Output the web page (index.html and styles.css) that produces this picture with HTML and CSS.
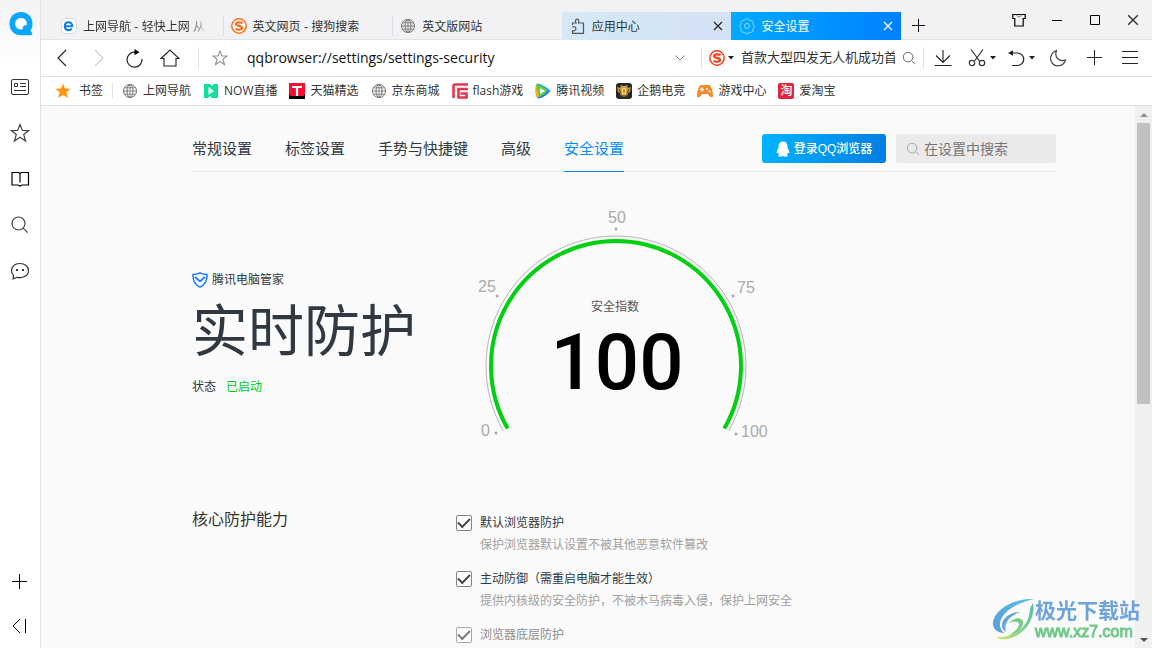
FILE: index.html
```html
<!DOCTYPE html>
<html lang="zh-CN">
<head>
<meta charset="utf-8">
<title>安全设置</title>
<link rel="stylesheet" href="styles.css">
</head>
<body>
<svg class="sprite" aria-hidden="true">
  <symbol id="globe" viewBox="0 0 16 16"><g fill="none" stroke="#707070"><circle cx="8" cy="8" r="6.5"/><ellipse cx="8" cy="8" rx="3" ry="6.5"/><path d="M8 1.5v13M2.5 4.8h11M1.5 8h13M2.5 11.2h11" stroke-width=".8"/></g></symbol>
  <symbol id="sogou" viewBox="0 0 16 16"><circle cx="8" cy="8" r="7.2" fill="#fff" stroke="currentColor" stroke-width="1.500"/><path d="M11.500 5.200C10 3.900 5.200 3.900 5 6.100c-.1 2.200 6.100 1.400 6 3.800-.1 2.300-4.800 2.300-6.400.8" fill="none" stroke="currentColor" stroke-width="2.200"/></symbol>
  <symbol id="lens" viewBox="0 0 16 16"><circle cx="7" cy="7" r="5.500" fill="none" stroke="currentColor"/><path d="M11 11l4 4" stroke="currentColor"/></symbol>
  <symbol id="cross" viewBox="0 0 10 10"><path d="M1 1l8 8M9 1l-8 8" stroke="currentColor" stroke-width="1.2"/></symbol>
  <symbol id="caret" viewBox="0 0 6 4"><path d="M0 0h6L3 3.5z" fill="#222"/></symbol>
</svg>

<aside class="sidebar">
  <a class="logo" href="#" aria-label="QQ浏览器"><svg width="24" height="24" viewBox="0 0 24 24"><path d="M12 0C5 0 .5 5 .5 11.700c0 6.800 5 11.500 11.500 11.500h10.200c1.300 0 1.500-1.200.8-2.100l-1.500-2.300c1.400-2 2-4.400 2-7C23.500 5 18.800 0 12 0z" fill="#0aa5ff"/><path d="M12 6c-3.500 0-5.800 2.500-5.800 5.800S8.500 17.500 12 17.500c.8 0 1.500-.1 2-.4-1-2.200.7-4.200 3.500-3.700C18.600 9.500 16.200 6 12 6z" fill="#fff"/></svg></a>
  <button class="side-btn" aria-label="资讯"><svg width="20" height="20" viewBox="0 0 20 20" fill="none" stroke="#333"><rect x="1.500" y="2.500" width="17" height="15" rx="1.500"/><path d="M4.500 6.500h3v3h-3zM10 6.500h6M10 9.500h6M4 13.500h12"/></svg></button>
  <button class="side-btn" aria-label="收藏"><svg width="20" height="20" viewBox="0 0 20 20"><path d="M10 1.500l2.400 6h6.200l-4.900 4 1.900 6.500L10 14.200 4.400 18l1.900-6.500-4.900-4h6.200z" fill="none" stroke="#444" stroke-width="1.200"/></svg></button>
  <button class="side-btn" aria-label="阅读"><svg width="20" height="20" viewBox="0 0 20 20"><path d="M2 3.500h6.500l1.500 1 1.500-1H18.500v12.500H12l-2 1-2-1H2zM10 4.500v9" fill="none" stroke="#000" stroke-width="1.200"/></svg></button>
  <button class="side-btn" aria-label="搜索"><svg width="20" height="20" viewBox="0 0 20 20" fill="none" stroke="#444" stroke-width="1.200"><circle cx="8.500" cy="8.500" r="6.500"/><path d="M13.200 13.200l4.500 4.500"/></svg></button>
  <button class="side-btn" aria-label="消息"><svg width="20" height="20" viewBox="0 0 20 20"><path d="M3 17.800l.6-3.500C-1 9.500 2.500 2.500 10 2.500c5 0 8.500 3 8.500 7.200 0 4.800-5.500 8-11 6.600z" fill="none" stroke="#333" stroke-width="1.200"/><path d="M6 8h2v2H6zM12 8h2v2h-2z" fill="#333"/></svg></button>
  <div class="spacer"></div>
  <button class="side-btn side-low" aria-label="添加"><svg width="16" height="16" viewBox="0 0 16 16"><path d="M7.500 0v15M0 7.500h15" stroke="#000"/></svg></button>
  <button class="side-btn side-low" aria-label="收起"><svg width="16" height="16" viewBox="0 0 16 16"><path d="M8 1L1 8l7 7M13.500 1v14" fill="none" stroke="#000"/></svg></button>
</aside>

<div class="window">
  <header class="tabbar">
    <nav class="tabs" aria-label="标签页">
      <a class="tab" href="#"><svg width="16" height="16" viewBox="0 0 16 16"><rect x=".5" y=".5" width="15" height="15" rx="5" fill="#fff" stroke="#d4d8dd"/><path d="M4 8.200h7.300C11.300 2.800 3.800 2.900 3.800 8.200c0 4.500 5 5 7 2.500" fill="none" stroke="#0b7cea" stroke-width="2"/></svg><span class="tab-title fade">上网导航 - 轻快上网 从</span></a>
      <a class="tab divided" href="#"><svg class="orange" width="16" height="16"><use href="#sogou"/></svg><span class="tab-title">英文网页 - 搜狗搜索</span></a>
      <a class="tab divided" href="#"><svg width="16" height="16"><use href="#globe"/></svg><span class="tab-title">英文版网站</span></a>
      <div class="tab pale"><svg width="16" height="16" viewBox="0 0 16 16"><path d="M2.500 7V5H6C3.800-.3 10.200-.3 8.500 5H13.500v10.400H2.500V12.800c4.500.8 4.500-5 0-4" fill="none" stroke="#555" stroke-width="1.200"/></svg><a class="tab-title" href="#">应用中心</a><button class="tab-close" aria-label="关闭"><svg width="10" height="10"><use href="#cross"/></svg></button></div>
      <div class="tab current"><svg width="16" height="16" viewBox="0 0 16 16" fill="none" stroke="#9ad6ff"><path d="M8 .6c1.200 0 1.800 1.500 3 1.800s2.300.1 2.900 1-.2 2.200.2 3.100 1.300 1 1.300 1.800-.9 1.200-1.300 2.200.4 2.300-.3 3-2 .6-2.900 1S9.200 15.500 8 15.500s-1.800-.7-2.900-1.100-2.200-.2-2.900-1 .2-2-.2-3S.6 9.200.6 8.300s1-1.100 1.400-2-.4-2.200.3-3 1.700-.6 2.800-1S6.900.6 8 .6z"/><circle cx="8" cy="8" r="2.500"/></svg><a class="tab-title" href="#">安全设置</a><button class="tab-close" aria-label="关闭"><svg width="10" height="10"><use href="#cross"/></svg></button></div>
    </nav>
    <button class="new-tab" aria-label="新建标签页"><svg width="14" height="14" viewBox="0 0 14 14"><path d="M6.500 0v13M0 6.500h13" stroke="#111"/></svg></button>
    <div class="spacer"></div>
    <div class="controls">
      <button aria-label="皮肤"><svg width="14" height="14" viewBox="0 0 14 14" fill="none" stroke="#000"><path d="M.8 1.500h12.400v4h-2v7.500H2.800V5.500h-2z" stroke-width="1.200"/><path d="M4.500 1.500c.5 3 4.500 3 5 0" stroke="#777"/></svg></button>
      <button aria-label="最小化"><svg width="10" height="10" viewBox="0 0 10 10"><path d="M0 5.500h10" stroke="#000"/></svg></button>
      <button aria-label="最大化"><svg width="10" height="10" viewBox="0 0 10 10"><path d="M.5.5h9v9h-9z" fill="none" stroke="#000"/></svg></button>
      <button aria-label="关闭窗口"><svg width="12" height="12"><use href="#cross"/></svg></button>
    </div>
  </header>

  <div class="toolbar">
    <button class="tool" aria-label="后退"><svg width="18" height="18" viewBox="0 0 18 18"><path d="M13 1L5 9l8 8" fill="none" stroke="#222" stroke-width="1.100"/></svg></button>
    <button class="tool" aria-label="前进"><svg width="18" height="18" viewBox="0 0 18 18"><path d="M6 1l8 8-8 8" fill="none" stroke="#ccc" stroke-width="1.100"/></svg></button>
    <button class="tool" aria-label="刷新"><svg width="18" height="20" viewBox="0 0 18 20"><path d="M11 4.200H9A7.500 7.500 0 1 0 17 11" fill="none" stroke="#222" stroke-width="1.200"/><path d="M9.500 1l5 3.200-5 3z" fill="#000"/></svg></button>
    <button class="tool" aria-label="主页"><svg width="20" height="18" viewBox="0 0 20 18"><path d="M1 9.500L10 1l9 8.500h-3V17H4V9.500z" fill="none" stroke="#222" stroke-width="1.100"/></svg></button>
    <i class="rule nav-rule"></i>
    <button class="tool" aria-label="添加书签"><svg width="16" height="16" viewBox="0 0 16 16"><path d="M8 1l1.900 5H15l-4.100 3.200 1.500 5.300L8 11.400l-4.400 3.100 1.500-5.300L1 6h5.100z" fill="none" stroke="#999" stroke-width="1.200"/></svg></button>
    <input class="address" type="text" aria-label="地址" value="qqbrowser://settings/settings-security">
    <button class="drop" aria-label="历史地址"><svg width="10" height="6" viewBox="0 0 10 6"><path d="M.5.500L5 5 9.500.5" fill="none" stroke="#888"/></svg></button>
    <i class="rule"></i>
    <div class="websearch">
      <button class="engine" aria-label="搜索引擎"><svg class="red" width="16" height="16"><use href="#sogou"/></svg><svg width="6" height="4"><use href="#caret"/></svg></button>
      <input class="query" type="text" aria-label="搜索" value="首款大型四发无人机成功首飞">
      <button class="go" aria-label="搜索"><svg width="14" height="14"><use href="#lens"/></svg></button>
    </div>
    <i class="rule"></i>
    <button class="tool wide" aria-label="下载"><svg width="18" height="18" viewBox="0 0 18 18"><path d="M9 1v12M2 6.500L9 13.500l7-7M.5 16.500h17" fill="none" stroke="#222" stroke-width="1.100"/></svg></button>
    <button class="tool split" aria-label="截图"><svg width="18" height="18" viewBox="0 0 18 18" fill="none" stroke="#333" stroke-width="1.200"><path d="M3 .5L11.500 12M15 .5L6.500 12"/><circle cx="4" cy="14" r="2.700"/><circle cx="14" cy="14" r="2.700"/></svg><svg width="6" height="4"><use href="#caret"/></svg></button>
    <button class="tool split" aria-label="撤销"><svg width="18" height="18" viewBox="0 0 18 18"><path d="M3 4h7.500a6.200 6.200 0 0 1 0 12.500H5" fill="none" stroke="#222" stroke-width="1.200"/><path d="M1 4l5-2.800v5.600z" fill="#222"/></svg><svg width="6" height="4"><use href="#caret"/></svg></button>
    <button class="tool" aria-label="夜间模式"><svg width="18" height="18" viewBox="0 0 18 18"><path d="M7.500 1.500C5 8 10 13 16.500 11.200 14 17.500 7 18.500 3.500 14.500S1.500 3.800 7.500 1.500z" fill="none" stroke="#444" stroke-width="1.200"/></svg></button>
    <button class="tool" aria-label="添加工具"><svg width="16" height="16" viewBox="0 0 16 16"><path d="M8.500 0v15M1 7.500h15" stroke="#222"/></svg></button>
    <button class="tool" aria-label="菜单"><svg width="16" height="14" viewBox="0 0 16 14"><path d="M0 .5h16M0 6.500h16M0 12.500h16" stroke="#222"/></svg></button>
  </div>

  <nav class="bookmarks" aria-label="书签栏">
    <a class="all" href="#"><svg width="16" height="16" viewBox="0 0 16 16"><path d="M8 .5l2 5.100 5.700.2-4.400 3.500 1.600 5.700L8 11.900 3.100 15l1.600-5.700L.3 5.800 6 5.600z" fill="#ff960d"/></svg>书签</a>
    <i class="rule"></i>
    <a href="#"><svg width="16" height="16"><use href="#globe"/></svg>上网导航</a>
    <a href="#"><svg width="16" height="16" viewBox="0 0 16 16"><path d="M1 1h6l2 2 2-2h4v14H9l-2-2-2 2H1z" fill="#10e09c"/><path d="M5.500 4v8l5.500-4z" fill="#fff"/></svg>NOW直播</a>
    <a href="#"><svg width="16" height="16" viewBox="0 0 16 16"><path d="M0 0h16v16H0z" fill="#ff0b32"/><path d="M0 11q1.500 3 4 2h8q2.500 1 4-2v5H0z" fill="#000"/><path d="M3 4h10M8 4v9" stroke="#fff" stroke-width="2.200"/></svg>天猫精选</a>
    <a href="#"><svg width="16" height="16"><use href="#globe"/></svg>京东商城</a>
    <a href="#"><svg width="16" height="16" viewBox="0 0 16 16"><path d="M1.500 15V3q0-1.500 1.500-1.500H16M6.500 15.500V6H16M8.500 10.500h6v4H6" fill="none" stroke="#e8344e" stroke-width="2.600"/></svg>flash游戏</a>
    <a href="#"><svg width="16" height="16" viewBox="0 0 16 16"><path d="M2 .5C6 .5 13 5 15.500 8L8 8 1 4z" fill="#18a5f5"/><path d="M15.500 8C12 12 7 15.500 2.500 15.500L2 8z" fill="#2878e8"/><path d="M1 1.500Q-1 8 1.500 14.500 7 13 12 8 7 2 1 1.500z" fill="#ffae13"/><path d="M1 1.500C5 1.500 10 5 12 8c-2 3-5 5-8 6z" fill="#59d33b"/><path d="M5 5v6l5-3z" fill="#fff"/></svg>腾讯视频</a>
    <a href="#"><svg width="16" height="16" viewBox="0 0 16 16"><rect width="16" height="16" rx="3" fill="#282828"/><path d="M1 4l3 1 1-3 2 1h2l2-1 1 3 3-1-1 5-2 1-1 3-3 1-3-1-1-3-2-1z" fill="#c9963b"/><ellipse cx="8" cy="8" rx="2.500" ry="3.500" fill="#f2d27b"/><path d="M8 6.500v3M3 6l2 4M13 6l-2 4M5 13h6" stroke="#59410f"/></svg>企鹅电竞</a>
    <a href="#"><svg width="16" height="16" viewBox="0 0 16 16"><path d="M4 2h8c2 0 4 6 4 11 0 2-3 1.500-4-.5l-1-1.500H5l-1 1.500c-1 2-4 2.500-4 .5C0 8 2 2 4 2z" fill="#f5892b"/><path d="M3 6.500h4M5 4.500v4M9 6h2M11.500 8.500h2" stroke="#fff" stroke-width="1.500"/></svg>游戏中心</a>
    <a href="#"><span class="tao">淘</span>爱淘宝</a>
  </nav>

  <div class="viewport">
    <main class="page">
      <div class="page-head">
        <nav class="sections" aria-label="设置">
          <a href="#">常规设置</a><a href="#">标签设置</a><a href="#">手势与快捷键</a><a href="#">高级</a><a class="on" href="#">安全设置</a>
        </nav>
        <button class="login"><svg width="14" height="16" viewBox="0 0 14 16"><path d="M7 .5c3 0 4.500 2 4.500 5v1.500c1.500 2 2.300 4 1.700 5.300-.4.500-1-.3-1.400-.8-.2.900-.6 1.500-1 2 1.500.5 1.500 2 .2 2H8L7 15l-1 .5H3c-1.300 0-1.300-1.500.2-2-.4-.5-.8-1.100-1-2-.4.500-1 1.300-1.400.8C.2 11 1 9 2.500 7V5.500c0-3 1.500-5 4.500-5z" fill="#fff"/></svg>登录QQ浏览器</button>
        <label class="find"><svg width="14" height="14"><use href="#lens"/></svg><input type="text" placeholder="在设置中搜索" aria-label="在设置中搜索"></label>
      </div>

      <section class="hero">
        <div class="guard">
          <p class="brand"><svg width="16" height="16" viewBox="0 0 16 16" fill="none" stroke="#1b78ff"><path d="M8 .8C10 2 13 2.500 15 2.500 15.200 8.500 12.500 13 8 15.200 3.500 13 .8 8.500 1 2.500 3 2.500 6 2 8 .8z" stroke-width="1.500"/><path d="M3 5l5 4.300L13 5" stroke-width="1.700"/></svg>腾讯电脑管家</p>
          <h1>实时防护</h1>
          <p class="status">状态<span>已启动</span></p>
        </div>
        <svg class="gauge" width="300" height="236" viewBox="0 0 300 236" role="img" aria-label="安全指数 100">
          <path d="M27.400 223A130 130 0 1 1 252.600 223" fill="none" stroke="#b5b5b5"/>
          <path d="M31.700 220.500A125 125 0 1 1 248.300 220.500" fill="none" stroke="#00cf12" stroke-width="4"/>
          <g fill="#aaa"><circle cx="140" cy="21" r="1.500"/><circle cx="21" cy="88" r="1.500"/><circle cx="257" cy="88" r="1.500"/><circle cx="20" cy="225" r="1.500"/><circle cx="260" cy="226" r="1.500"/></g>
          <g class="ticks"><text x="132" y="15">50</text><text x="2" y="84">25</text><text x="261" y="85">75</text><text x="5" y="228">0</text><text x="265" y="229">100</text></g>
          <text class="caption" x="139" y="103">安全指数</text>
          <text class="score" x="141" y="181">100</text>
        </svg>
      </section>

      <section class="core">
        <h2>核心防护能力</h2>
        <div class="options">
          <div class="option"><input id="o1" type="checkbox" checked><label for="o1">默认浏览器防护</label><p>保护浏览器默认设置不被其他恶意软件篡改</p></div>
          <div class="option"><input id="o2" type="checkbox" checked><label for="o2">主动防御（需重启电脑才能生效）</label><p>提供内核级的安全防护，不被木马病毒入侵，保护上网安全</p></div>
          <div class="option muted"><input id="o3" type="checkbox" checked disabled><label for="o3">浏览器底层防护</label></div>
        </div>
      </section>
    </main>
    <div class="scrollbar" aria-hidden="true"><span class="up"></span><span class="thumb"></span><span class="down"></span></div>
  </div>
</div>

<div class="watermark">
  <svg width="42" height="42" viewBox="0 0 42 42"><defs><linearGradient id="sky" x1="0" y1="1" x2="1" y2="0"><stop offset="0" stop-color="#5b9bd8"/><stop offset="1" stop-color="#58c0ee"/></linearGradient><linearGradient id="leaf" x1="0" y1="1" x2="1" y2="0"><stop offset="0" stop-color="#dbe66a"/><stop offset=".5" stop-color="#7fd08a"/><stop offset="1" stop-color="#55b8b0"/></linearGradient></defs><path d="M42 0C23-1 3 10 1 23c-1 7 5 11 11 11C5 28 7 18 18 10 25 5 33 2 42 0z" fill="url(#sky)"/><path d="M14 33C5 27 12 13 29 13c-11 3-18 11-15 20z" fill="#67a4dc"/><path d="M17 24c6-7 15-6 14 1-1 6-9 12-16 13 6-4 11-8 12-12 1-4-5-4-10-2z" fill="#78cc8c"/><path d="M41 4c3 16-9 33-26 36-4 1-8 0-11-2 17 1 28-8 32-18 2-5 1-11 5-16z" fill="url(#leaf)"/></svg>
  <div><b>极光下载站</b><span>www.xz7.com</span></div>
</div>
</body>
</html>
```
FILE: styles.css
```css
* { box-sizing: border-box; }

body {
  margin: 0;
  display: flex;
  height: 100vh;
  overflow: hidden;
  background: #fafafa;
  color: #333;
  font: 12px/16px "Liberation Sans", "Noto Sans CJK SC", sans-serif;
}

button {
  display: flex;
  align-items: center;
  justify-content: center;
  padding: 0;
  border: 0;
  background: none;
  color: inherit;
  font: inherit;
}

input { border: 0; outline: 0; padding: 0; min-width: 0; background: none; color: inherit; font: inherit; }
a { color: inherit; text-decoration: none; }
h1, h2, p { margin: 0; font-weight: 400; }
svg { flex: none; }
.sprite { position: absolute; width: 0; height: 0; }
.spacer { flex: 1; }
.orange { color: #ff6f1d; }
.red { color: #f5411e; }
.rule { flex: none; width: 1px; height: 22px; background: #e2e2e2; }

/* Sidebar */
.sidebar {
  flex: none;
  display: flex;
  flex-direction: column;
  width: 41px;
  border-right: 1px solid #e2e2e4;
  background: linear-gradient(#f3f3f5, #fff 64px);
}
.logo { height: 64px; padding: 12px 0 0 9px; }
.side-btn { height: 46px; }
.side-low { height: 44px; }

.window { flex: 1; min-width: 0; display: flex; flex-direction: column; }

/* Tabs */
.tabbar {
  flex: none;
  display: flex;
  height: 40px;
  padding-left: 12px;
  background: #f2f2f4;
  box-shadow: inset 0 -1px #e2e2e4;
}
.tabs { display: flex; flex: 0 1 848px; min-width: 0; padding-top: 12px; }
.tab { position: relative; flex: 1; min-width: 0; display: flex; align-items: center; gap: 6px; padding: 0 8px; }
.divided::before { content: ""; position: absolute; left: 0; top: 4px; width: 1px; height: 20px; background: #dedee2; }
.tab-title { flex: 1; min-width: 0; padding-top: 2px; overflow: hidden; white-space: nowrap; }
.fade { mask-image: linear-gradient(90deg, #000 104px, transparent 126px); }
.pale { background: linear-gradient(90deg, #d5e9f5, #d3e2f5); }
.current { background: linear-gradient(90deg, #00aaff, #0080ff); color: #fff; }
.tab-close { width: 10px; height: 16px; color: #222; }
.current .tab-close { color: #fff; }
.new-tab { width: 36px; padding-top: 12px; }
.controls { display: flex; }
.controls button { width: 38px; height: 40px; }

/* Toolbar */
.toolbar {
  flex: none;
  display: flex;
  align-items: center;
  height: 37px;
  padding: 0 4px 0 3px;
  border-bottom: 1px solid #e2e2e4;
  background: #fff;
}
.tool { flex: none; gap: 4px; width: 36px; height: 36px; }
.wide { width: 38px; }
.split { width: 39px; }
.nav-rule { margin: 0 3px 0 10px; }
.address { flex: 1; margin-left: 9px; color: #111; font: 14px/20px "Open Sans", sans-serif; }
.drop { width: 24px; height: 24px; margin-right: 9px; }
.websearch { flex: 0 1 221px; min-width: 0; display: flex; align-items: center; padding: 0 7px; }
.engine { flex: none; gap: 3px; margin-right: 7px; }
.query { flex: 1; width: 0; font-size: 13px; }
.go { flex: none; margin-left: 7px; color: #555; }

/* Bookmarks */
.bookmarks {
  flex: none;
  display: flex;
  align-items: center;
  gap: 12px;
  height: 29px;
  padding-left: 14px;
  border-bottom: 1px solid #e2e2e4;
  background: #fff;
  font-family: "Open Sans", "Noto Sans CJK SC", sans-serif;
  white-space: nowrap;
}
.bookmarks a { display: flex; align-items: center; gap: 5px; }
.bookmarks .all { gap: 8px; }
.bookmarks .rule { height: 16px; margin: 0 -3px; }
.tao { width: 16px; border-radius: 2px; background: #e0243a; color: #fff; font-weight: 500; text-align: center; }

/* Settings page */
.viewport { flex: 1; min-height: 0; display: flex; }
.page { flex: 1; min-width: 0; padding: 28px 80px 0 151px; overflow: hidden; }
.page-head { display: flex; align-items: flex-start; gap: 10px; height: 38px; border-bottom: 1px solid #e9e9e9; }
.sections { flex: 1; display: flex; gap: 33px; color: #303942; font-size: 15px; line-height: 29px; white-space: nowrap; }
.sections a { height: 38px; }
.sections .on { border-bottom: 1px solid #0a84f0; color: #0a8cff; }
.login {
  gap: 4px;
  width: 124px;
  height: 29px;
  border-radius: 3px;
  background: linear-gradient(100deg, #00b4ff, #007de3);
  color: #fff;
  font-weight: 500;
}
.find {
  display: flex;
  align-items: center;
  gap: 4px;
  width: 160px;
  height: 29px;
  padding: 0 10px;
  border-radius: 3px;
  background: #eaeaea;
  color: #999;
}
.find input { flex: 1; font-size: 14px; line-height: 20px; }
.find input::placeholder { color: #757575; }

.hero { display: grid; grid-template-columns: 284px 1fr; padding-top: 36px; }
.guard { padding-top: 64px; color: #303942; }
.brand { display: flex; align-items: center; gap: 4px; }
h1 { margin-top: 4px; font-size: 56px; line-height: 80px; }
.status { margin-top: 7px; }
.status span { margin-left: 10px; color: #00c814; }
.ticks { fill: #aaa; font-size: 16px; }
.caption { fill: #555; font-size: 12px; text-anchor: middle; }
.score { fill: #000; font: 500 78px Roboto, sans-serif; text-anchor: middle; }

.core { display: grid; grid-template-columns: 264px 1fr; padding-top: 71px; }
h2 { margin-top: -5px; font-size: 16px; line-height: 20px; }
.options { display: grid; gap: 18px; }
.option { display: grid; grid-template-columns: 16px 1fr; column-gap: 8px; row-gap: 6px; }
.option label { color: #303942; }
.option p { grid-column: 2; color: #a0a0a0; }
.option input {
  appearance: none;
  display: grid;
  place-items: center;
  width: 16px;
  height: 16px;
  margin: 0;
  border: 1px solid #858585;
  border-radius: 2px;
  background: #fff;
}
.option input:checked::after {
  content: "";
  width: 10px;
  height: 5px;
  margin-top: -3px;
  border: solid #4a4a4a;
  border-width: 0 0 2px 2px;
  transform: rotate(-45deg);
}
.muted input { opacity: .7; }
.option.muted label { color: #8c8c8c; }

.scrollbar { flex: none; display: flex; flex-direction: column; align-items: center; width: 17px; padding: 7px 0 6px; background: #f0f0f0; }
.up { border: 4px solid transparent; border-top: 0; border-bottom-color: #909090; }
.thumb { width: 13px; height: 281px; margin: 6px 0 auto; background: #c1c1c1; }
.down { border: 4px solid transparent; border-bottom: 0; border-top-color: #505050; }
.page { padding-right: 79px; }

/* Floating site mark */
.watermark { position: fixed; right: 11px; bottom: 7px; display: flex; align-items: center; gap: 1px; }
.watermark div { display: flex; flex-direction: column; width: 106px; }
.watermark b { color: #6ea3dc; font-size: 21px; line-height: 24px; }
.watermark span { color: #72c98c; font-size: 16px; line-height: 18px; -webkit-text-stroke: 1px #72c98c; }
```
